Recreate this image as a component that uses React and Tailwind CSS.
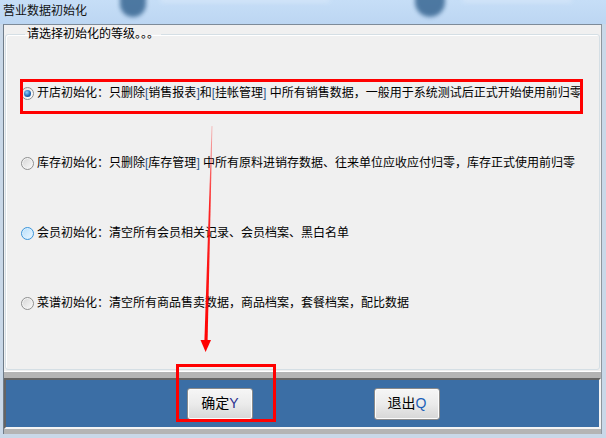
import React from "react";

const options = [
  {
    key: "store",
    radio: "checked",
    text: (
      <>
        开店初始化：只删除<B>[</B>销售报表<B>]</B>和<B>[</B>挂帐管理<B>]</B> 中所有销售数据，一般用于系统测试后正式开始使用前归零
      </>
    ),
  },
  {
    key: "stock",
    radio: "normal",
    text: (
      <>
        库存初始化：只删除<B>[</B>库存管理<B>]</B> 中所有原料进销存数据、往来单位应收应付归零，库存正式使用前归零
      </>
    ),
  },
  {
    key: "member",
    radio: "hover",
    text: <>会员初始化：清空所有会员相关记录、会员档案、黑白名单</>,
  },
  {
    key: "menu",
    radio: "normal",
    text: <>菜谱初始化：清空所有商品售卖数据，商品档案，套餐档案，配比数据</>,
  },
];

function B({ children }) {
  return <span className="text-[#2f5a8f]">{children}</span>;
}

function Radio({ state }) {
  if (state === "checked") {
    return (
      <span className="flex h-[13px] w-[13px] items-center justify-center rounded-full border border-[#8e8f8f] bg-gradient-to-br from-[#e2e2e2] to-[#ffffff]">
        <span className="h-[7px] w-[7px] rounded-full bg-[radial-gradient(circle_at_40%_35%,#8fd0ff,#1c64b0_60%,#0e3f80)]" />
      </span>
    );
  }
  if (state === "hover") {
    return (
      <span className="flex h-[13px] w-[13px] items-center justify-center rounded-full border border-[#3c94d8] bg-[#d9efff]">
        <span className="h-[9px] w-[9px] rounded-full bg-gradient-to-br from-[#b9e0fb] to-[#eaf6ff]" />
      </span>
    );
  }
  return (
    <span className="flex h-[13px] w-[13px] items-center justify-center rounded-full border border-[#8e8f8f] bg-[#f4f4f4]">
      <span className="h-[9px] w-[9px] rounded-full bg-gradient-to-br from-[#d8d8d8] to-[#f8f8f8]" />
    </span>
  );
}

function WinButton({ label, hotkey, hotColor }) {
  return (
    <button
      type="button"
      className="flex h-[32px] w-[66px] items-center justify-center rounded-[3px] border border-[#8a8a8a] bg-gradient-to-b from-[#f6f6f6] via-[#ebebeb] to-[#d6d6d6] text-[14px] text-black shadow-[inset_0_0_0_1px_#fcfcfc]"
    >
      {label}
      <span className={hotColor}>{hotkey}</span>
    </button>
  );
}

export default function App() {
  return (
    <div className="relative flex h-[438px] w-[606px] flex-col overflow-hidden bg-[#c9d8e8] font-['Liberation_Sans','Noto_Sans_CJK_SC',sans-serif] text-black">
      {/* title bar */}
      <div className="relative h-[24px] overflow-hidden bg-gradient-to-b from-[#c6def7] to-[#bcd6f2]">
        <div className="absolute left-[120px] top-[-10px] h-[27px] w-[26px] rounded-b-full bg-[#2f5f8c] opacity-80 blur-[2px]" />
        <div className="absolute left-[160px] top-[-4px] h-[7px] w-[170px] rounded-full bg-[#dceafa] opacity-50 blur-[2px]" />
        <div className="absolute left-[415px] top-[-10px] h-[27px] w-[30px] rounded-b-full bg-[#2f5f8c] opacity-80 blur-[2px]" />
        <div className="absolute left-[462px] top-[-4px] h-[7px] w-[110px] rounded-full bg-[#dceafa] opacity-50 blur-[2px]" />
        <div className="relative pl-[3px] pt-[3px] text-[12px] leading-[16px] text-[#111]">营业数据初始化</div>
      </div>

      {/* body */}
      <div className="mb-[4px] ml-[3px] mr-[4px] flex flex-1 flex-col border-l border-r border-t border-l-[#6f7c89] border-r-[#8e969e] border-t-[#7d8b99] bg-[#b4b4b4]">
        <div className="h-[347px] border-b border-b-white bg-[#f0f0f0] px-[1px] pt-[1px]">
          <fieldset className="h-[344px] rounded-[3px] border border-[#d5dfe5] pl-[15px] shadow-[inset_1px_1px_0_#ffffff]">
            <legend className="ml-[4px] px-[2px] text-[12px] leading-[16px]">请选择初始化的等级。。。</legend>
            <div className="mt-[43px] flex flex-col gap-[54px]">
              {options.map((o) => (
                <div key={o.key} className="flex h-[16px] items-center text-[12px] leading-[16px] whitespace-nowrap">
                  <Radio state={o.radio} />
                  <span className="ml-[3px]">{o.text}</span>
                </div>
              ))}
            </div>
          </fieldset>
        </div>

        <div className="h-[6px]" />

        <div className="flex h-[51px] items-center gap-[121px] border-b-2 border-l-2 border-r-2 border-t-2 border-b-[#f4f4f4] border-l-[#646464] border-r-[#f4f4f4] border-t-[#646464] bg-[#3b6ea5] pl-[181px]">
          <WinButton label="确定" hotkey="Y" hotColor="text-[#2b2f8f]" />
          <WinButton label="退出" hotkey="Q" hotColor="text-[#1c5fb8]" />
        </div>
      </div>

      {/* annotations */}
      <div className="pointer-events-none absolute left-[20px] top-[79px] h-[35px] w-[563px] border-[3px] border-[#ff0000]" />
      <div className="pointer-events-none absolute left-[176px] top-[364px] h-[58px] w-[100px] border-[3px] border-[#ff0000]" />
      <svg className="pointer-events-none absolute left-0 top-0" width="606" height="438">
        <defs>
          <linearGradient id="arrowFade" x1="0" y1="126" x2="0" y2="352" gradientUnits="userSpaceOnUse">
            <stop offset="0" stopColor="#ff0000" stopOpacity="0.25" />
            <stop offset="0.35" stopColor="#ff0000" stopOpacity="0.85" />
            <stop offset="1" stopColor="#ff0000" stopOpacity="1" />
          </linearGradient>
        </defs>
        <polygon points="211.6,126 212.4,126 207.6,341 204.4,341" fill="url(#arrowFade)" />
        <polygon points="200.5,340 211,340 205.6,352" fill="#ff0000" />
      </svg>
    </div>
  );
}
